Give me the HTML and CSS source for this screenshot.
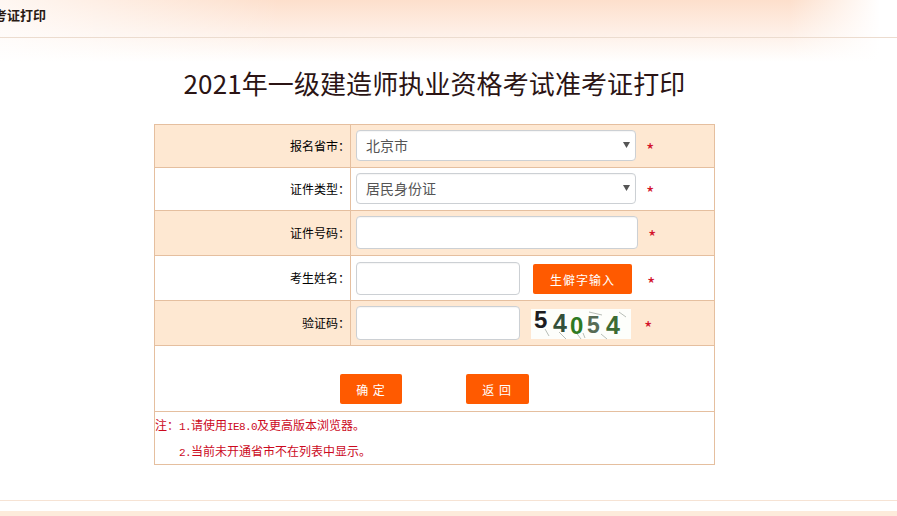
FILE: index.html
```html
<!DOCTYPE html>
<html lang="zh-CN">
<head>
    <meta charset="utf-8">
    <title>准考证打印</title>
    <link rel="stylesheet" href="styles.css">
</head>
<body>
    <div class="top-bar"><span class="top-title">准考证打印</span></div>

    <div class="content">
        <h1>2021年一级建造师执业资格考试准考证打印</h1>
        <form id="printForm">
            <table class="form-table">
                <tr class="row-a">
                    <td class="label">报名省市：</td>
                    <td>
                        <div class="field">
                            <select class="select-box"><option>北京市</option></select>
                            <span class="star star-1">*</span>
                        </div>
                    </td>
                </tr>
                <tr class="row-b">
                    <td class="label">证件类型：</td>
                    <td>
                        <div class="field">
                            <select class="select-box"><option>居民身份证</option></select>
                            <span class="star star-1">*</span>
                        </div>
                    </td>
                </tr>
                <tr class="row-c">
                    <td class="label">证件号码：</td>
                    <td>
                        <div class="field">
                            <input type="text" class="input-long">
                            <span class="star star-2">*</span>
                        </div>
                    </td>
                </tr>
                <tr class="row-d">
                    <td class="label">考生姓名：</td>
                    <td>
                        <div class="field">
                            <input type="text" class="input-short">
                            <button type="button" class="btn btn-rare">生僻字输入</button>
                            <span class="star star-3">*</span>
                        </div>
                    </td>
                </tr>
                <tr class="row-e">
                    <td class="label">验证码：</td>
                    <td>
                        <div class="field">
                            <input type="text" class="input-short input-code">
                            <svg class="captcha" width="100" height="30" viewBox="0 0 100 30">
                                <rect width="100" height="30" fill="#fdfefb"/>
                                <g fill="none" stroke="#b9bfb8" stroke-width="1">
                                    <path d="M14 20l4 7M28 23l7 7M44 22l6 8M58 3l13 3M70 25l6 5M88 3l7 5M52 24l2 5"/>
                                </g>
                                <g class="captcha-text">
                                    <text x="3" y="19" fill="#1c1c20" font-size="24">5</text>
                                    <text x="22" y="23" fill="#33503a" font-size="25">4</text>
                                    <text x="39" y="25" fill="#2e7a22" font-size="24">0</text>
                                    <text x="56" y="24" fill="#566b56" font-size="23">5</text>
                                    <text x="75" y="25" fill="#3c6b34" font-size="25">4</text>
                                </g>
                            </svg>
                            <span class="star star-4">*</span>
                        </div>
                    </td>
                </tr>
                <tr class="row-f">
                    <td colspan="2" class="actions">
                        <button type="button" class="btn btn-ok">确 定</button>
                        <button type="button" class="btn btn-back">返 回</button>
                    </td>
                </tr>
                <tr class="row-g">
                    <td colspan="2" class="notes">
                        <p>注：<span class="latin">1.</span>请使用<span class="latin">IE8.0</span>及更高版本浏览器。</p>
                        <p class="note-indent"><span class="latin">2.</span>当前未开通省市不在列表中显示。</p>
                    </td>
                </tr>
            </table>
        </form>
    </div>

    <div class="bottom-bar"></div>
</body>
</html>
```

FILE: styles.css
```css
html,
body {
    height: 516px;
    overflow: hidden;
}

body {
    margin: 0;
    font-family: "Noto Sans CJK SC", "Liberation Sans", sans-serif;
    font-size: 12px;
    color: #222;
    background-color: #fff;
    background-image:
        linear-gradient(to right, rgba(255, 255, 255, 0.75), rgba(255, 255, 255, 0) 280px, rgba(255, 255, 255, 0) 790px, #fff 880px),
        linear-gradient(to bottom, #fddfcc, #fff 62px);
    background-size: 100% 62px;
    background-repeat: no-repeat;
}

.top-bar {
    height: 37px;
    border-bottom: 1px solid #ecdccf;
    line-height: 30px;
}

.top-title {
    display: block;
    margin-left: -19px;
    font-size: 13px;
    font-weight: bold;
    color: #2a1a14;
}

.content {
    width: 869px;
}

h1 {
    margin: 0;
    padding-top: 25px;
    height: 61px;
    line-height: 40px;
    text-align: center;
    font-size: 26px;
    font-weight: normal;
    letter-spacing: 0.1px;
    color: #2b1414;
}

.form-table {
    width: 561px;
    margin: 0 auto;
    border-collapse: collapse;
    table-layout: fixed;
}

.form-table td {
    box-sizing: border-box;
    border: 1px solid #e5bf9f;
    padding: 0;
}

.row-a td,
.row-c td,
.row-e td {
    background-color: #fee8d2;
}

.row-a td,
.row-b td {
    height: 43px;
}

.row-c td,
.row-d td,
.row-e td {
    height: 45px;
}

.row-f td {
    height: 66px;
}

.row-g td {
    height: 53px;
}

.form-table .label {
    width: 196px;
    padding-bottom: 2px;
    text-align: right;
    color: #000;
}

.field {
    display: flex;
    align-items: center;
    padding-left: 5px;
}

.select-box,
.field input {
    box-sizing: border-box;
    border: 1px solid #ccd0d4;
    border-radius: 4px;
    background-color: #fff;
    box-shadow: inset 0 1px 1px rgba(0, 0, 0, 0.04);
}

.select-box {
    width: 280px;
    height: 31px;
    margin-bottom: 2px;
    padding: 0 9px;
    appearance: none;
    font-family: inherit;
    font-size: 14px;
    color: #555;
    background-image: url("data:image/svg+xml,%3Csvg xmlns='http://www.w3.org/2000/svg' width='7' height='6'%3E%3Cpath d='M0 0h7L3.5 6z' fill='%23555'/%3E%3C/svg%3E");
    background-repeat: no-repeat;
    background-position: 266px 11px;
}

.input-long {
    width: 282px;
    height: 33px;
    margin-bottom: 2px;
}

.input-short {
    width: 164px;
    height: 33px;
}

.input-code {
    height: 34px;
}

.btn {
    height: 30px;
    padding: 0;
    border: none;
    border-radius: 2px;
    background-color: #ff5a00;
    color: #fff;
    font-family: inherit;
    font-size: 12px;
    letter-spacing: 1px;
    cursor: pointer;
}

.btn-rare {
    width: 99px;
    margin-top: 2px;
    margin-left: 13px;
}

.captcha {
    margin-top: 2px;
    margin-left: 11px;
    overflow: visible;
}

.captcha-text {
    font-family: "Liberation Sans", sans-serif;
    font-weight: bold;
}

.star {
    color: #d3122a;
    font-size: 18px;
    line-height: 1;
    padding-top: 6px;
}

.star-1 {
    margin-left: 10px;
}

.star-2 {
    margin-left: 10px;
}

.star-3 {
    margin-left: 15px;
    padding-top: 10px;
}

.star-4 {
    margin-left: 13px;
    padding-top: 8px;
}

.form-table .actions {
    padding: 28px 0 0 185px;
    vertical-align: top;
}

.btn-ok {
    width: 62px;
}

.btn-back {
    width: 63px;
    margin-left: 61px;
}

.notes {
    color: #cc0a1e;
    vertical-align: top;
}

.notes p {
    margin: 0;
    line-height: 26px;
}

.note-indent {
    padding-left: 24px;
}

.latin {
    font-family: "Liberation Mono", monospace;
    font-size: 11px;
    line-height: 1;
    letter-spacing: -0.6px;
}

.bottom-bar {
    margin-top: 35px;
    height: 5px;
    padding-top: 10px;
    border-top: 1px solid #f6e3d4;
    background-color: #fff;
    background-image: linear-gradient(#fdebdb, #fdebdb);
    background-repeat: no-repeat;
    background-position: 0 10px;
}
```
